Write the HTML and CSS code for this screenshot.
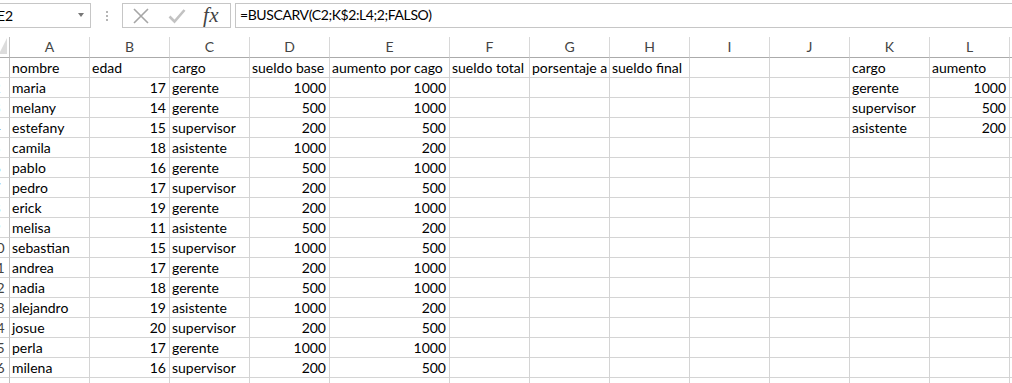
FILE: index.html
```html
<!DOCTYPE html>
<html lang="es">
<head>
<meta charset="utf-8">
<title>Hoja de cálculo</title>
<link rel="stylesheet" href="styles.css">
</head>
<body>
<div class="fbar">
  <div class="namebox"><span class="nb-text">E2</span><span class="nb-arrow"></span></div>
  <div class="grip"><i></i><i></i><i></i></div>
  <div class="iconbox">
    <svg class="ic-x" width="18" height="16" viewBox="0 0 18 16"><path d="M2 1 L16 15 M16 1 L2 15" stroke="#a6a6a6" stroke-width="1.6" fill="none"/></svg>
    <svg class="ic-ok" width="18" height="16" viewBox="0 0 18 16"><path d="M1.5 8.5 L6.5 13.5 L16.5 2" stroke="#c2c2c2" stroke-width="2.6" fill="none"/></svg>
    <span class="fx">fx</span>
  </div>
  <div class="formula">=BUSCARV(C2;K$2:L4;2;FALSO)</div>
</div>
<div class="sheet">
  <div class="corner"><svg width="8" height="16" viewBox="0 0 8 16"><path d="M8 0 L8 16 L0 16 Z" fill="#dcdcdc"/></svg></div>
  <div class="ch">A</div><div class="ch">B</div><div class="ch">C</div><div class="ch">D</div><div class="ch">E</div><div class="ch">F</div><div class="ch">G</div><div class="ch">H</div><div class="ch">I</div><div class="ch">J</div><div class="ch">K</div><div class="ch">L</div><div class="ch">M</div>

  <div class="rh">1</div><div class="c">nombre</div><div class="c">edad</div><div class="c">cargo</div><div class="c">sueldo base</div><div class="c">aumento por cago</div><div class="c">sueldo total</div><div class="c">porsentaje a</div><div class="c">sueldo final</div><div class="c"></div><div class="c"></div><div class="c">cargo</div><div class="c">aumento</div><div class="c"></div>
  <div class="rh">2</div><div class="c">maria</div><div class="c n">17</div><div class="c">gerente</div><div class="c n">1000</div><div class="c n">1000</div><div class="c"></div><div class="c"></div><div class="c"></div><div class="c"></div><div class="c"></div><div class="c">gerente</div><div class="c n">1000</div><div class="c"></div>
  <div class="rh">3</div><div class="c">melany</div><div class="c n">14</div><div class="c">gerente</div><div class="c n">500</div><div class="c n">1000</div><div class="c"></div><div class="c"></div><div class="c"></div><div class="c"></div><div class="c"></div><div class="c">supervisor</div><div class="c n">500</div><div class="c"></div>
  <div class="rh">4</div><div class="c">estefany</div><div class="c n">15</div><div class="c">supervisor</div><div class="c n">200</div><div class="c n">500</div><div class="c"></div><div class="c"></div><div class="c"></div><div class="c"></div><div class="c"></div><div class="c">asistente</div><div class="c n">200</div><div class="c"></div>
  <div class="rh">5</div><div class="c">camila</div><div class="c n">18</div><div class="c">asistente</div><div class="c n">1000</div><div class="c n">200</div><div class="c"></div><div class="c"></div><div class="c"></div><div class="c"></div><div class="c"></div><div class="c"></div><div class="c"></div><div class="c"></div>
  <div class="rh">6</div><div class="c">pablo</div><div class="c n">16</div><div class="c">gerente</div><div class="c n">500</div><div class="c n">1000</div><div class="c"></div><div class="c"></div><div class="c"></div><div class="c"></div><div class="c"></div><div class="c"></div><div class="c"></div><div class="c"></div>
  <div class="rh">7</div><div class="c">pedro</div><div class="c n">17</div><div class="c">supervisor</div><div class="c n">200</div><div class="c n">500</div><div class="c"></div><div class="c"></div><div class="c"></div><div class="c"></div><div class="c"></div><div class="c"></div><div class="c"></div><div class="c"></div>
  <div class="rh">8</div><div class="c">erick</div><div class="c n">19</div><div class="c">gerente</div><div class="c n">200</div><div class="c n">1000</div><div class="c"></div><div class="c"></div><div class="c"></div><div class="c"></div><div class="c"></div><div class="c"></div><div class="c"></div><div class="c"></div>
  <div class="rh">9</div><div class="c">melisa</div><div class="c n">11</div><div class="c">asistente</div><div class="c n">500</div><div class="c n">200</div><div class="c"></div><div class="c"></div><div class="c"></div><div class="c"></div><div class="c"></div><div class="c"></div><div class="c"></div><div class="c"></div>
  <div class="rh">10</div><div class="c">sebastian</div><div class="c n">15</div><div class="c">supervisor</div><div class="c n">1000</div><div class="c n">500</div><div class="c"></div><div class="c"></div><div class="c"></div><div class="c"></div><div class="c"></div><div class="c"></div><div class="c"></div><div class="c"></div>
  <div class="rh">11</div><div class="c">andrea</div><div class="c n">17</div><div class="c">gerente</div><div class="c n">200</div><div class="c n">1000</div><div class="c"></div><div class="c"></div><div class="c"></div><div class="c"></div><div class="c"></div><div class="c"></div><div class="c"></div><div class="c"></div>
  <div class="rh">12</div><div class="c">nadia</div><div class="c n">18</div><div class="c">gerente</div><div class="c n">500</div><div class="c n">1000</div><div class="c"></div><div class="c"></div><div class="c"></div><div class="c"></div><div class="c"></div><div class="c"></div><div class="c"></div><div class="c"></div>
  <div class="rh">13</div><div class="c">alejandro</div><div class="c n">19</div><div class="c">asistente</div><div class="c n">1000</div><div class="c n">200</div><div class="c"></div><div class="c"></div><div class="c"></div><div class="c"></div><div class="c"></div><div class="c"></div><div class="c"></div><div class="c"></div>
  <div class="rh">14</div><div class="c">josue</div><div class="c n">20</div><div class="c">supervisor</div><div class="c n">200</div><div class="c n">500</div><div class="c"></div><div class="c"></div><div class="c"></div><div class="c"></div><div class="c"></div><div class="c"></div><div class="c"></div><div class="c"></div>
  <div class="rh">15</div><div class="c">perla</div><div class="c n">17</div><div class="c">gerente</div><div class="c n">1000</div><div class="c n">1000</div><div class="c"></div><div class="c"></div><div class="c"></div><div class="c"></div><div class="c"></div><div class="c"></div><div class="c"></div><div class="c"></div>
  <div class="rh">16</div><div class="c">milena</div><div class="c n">16</div><div class="c">supervisor</div><div class="c n">200</div><div class="c n">500</div><div class="c"></div><div class="c"></div><div class="c"></div><div class="c"></div><div class="c"></div><div class="c"></div><div class="c"></div><div class="c"></div>
  <div class="rh">17</div><div class="c"></div><div class="c"></div><div class="c"></div><div class="c"></div><div class="c"></div><div class="c"></div><div class="c"></div><div class="c"></div><div class="c"></div><div class="c"></div><div class="c"></div><div class="c"></div><div class="c"></div>
</div>
</body>
</html>
```
FILE: styles.css
```css
html, body {
  margin: 0;
  padding: 0;
  background: #fff;
  overflow: hidden;
  width: 1012px;
  height: 383px;
}
body {
  font-family: Lato, "Open Sans", sans-serif;
  font-size: 14px;
  color: #000;
}
.fbar {
  height: 37px;
  display: flex;
  align-items: flex-start;
  padding-top: 3px;
  box-sizing: border-box;
}
.namebox {
  margin-left: -10px;
  width: 101px;
  height: 25px;
  box-sizing: border-box;
  border: 1px solid #c6c6c6;
  display: flex;
  align-items: center;
  padding-left: 6px;
  position: relative;
}
.nb-text {
  line-height: 22px;
}
.nb-arrow {
  position: absolute;
  left: 87px;
  top: 9px;
  width: 0;
  height: 0;
  border-left: 3.5px solid transparent;
  border-right: 3.5px solid transparent;
  border-top: 4px solid #777;
}
.grip {
  width: 31px;
  height: 25px;
  display: flex;
  flex-direction: column;
  align-items: center;
  justify-content: center;
  gap: 2px;
}
.grip i {
  display: block;
  width: 2px;
  height: 2px;
  background: #b5b5b5;
}
.iconbox {
  width: 109px;
  height: 25px;
  box-sizing: border-box;
  border: 1px solid #c6c6c6;
  display: flex;
  align-items: center;
  padding-left: 9px;
}
.ic-x { margin-right: 18px; }
.ic-ok { margin-right: 17px; }
.fx {
  font-family: "Liberation Serif", serif;
  font-style: italic;
  font-size: 21px;
  color: #444;
  line-height: 22px;
  letter-spacing: 0.5px;
  margin-top: -2px;
}
.formula {
  margin-left: 4px;
  flex: 1;
  height: 25px;
  box-sizing: border-box;
  border: 1px solid #c6c6c6;
  border-right: none;
  padding-left: 4px;
  line-height: 22px;
  white-space: nowrap;
  letter-spacing: -0.4px;
}
.sheet {
  margin-left: -16px;
  display: grid;
  grid-template-columns: 26px 80px 80px 80px 80px 120px 80px 80px 80px 80px 80px 80px 80px 40px;
  grid-template-rows: 21px;
  grid-auto-rows: 20px;
}
.sheet > div {
  box-sizing: border-box;
  border-right: 1px solid #d4d4d4;
  border-bottom: 1px solid #d4d4d4;
  white-space: nowrap;
  overflow: hidden;
  line-height: 19px;
}
.sheet > .corner {
  border-right: 1px solid #c0c0c0;
  border-bottom: 1px solid #ababab;
  display: flex;
  align-items: flex-end;
  justify-content: flex-end;
  padding: 0 2px 3px 0;
}
.corner svg { display: block; }
.sheet > .ch {
  text-align: center;
  color: #444;
  border-bottom-color: #ababab;
  line-height: 20px;
  border-right-color: #d8d8d8;
}
.sheet > .rh {
  text-align: center;
  color: #444;
  border-right-color: #c0c0c0;
}
.c {
  padding: 0 2px;
}
.c.n {
  text-align: right;
  padding-right: 3px;
}
```
